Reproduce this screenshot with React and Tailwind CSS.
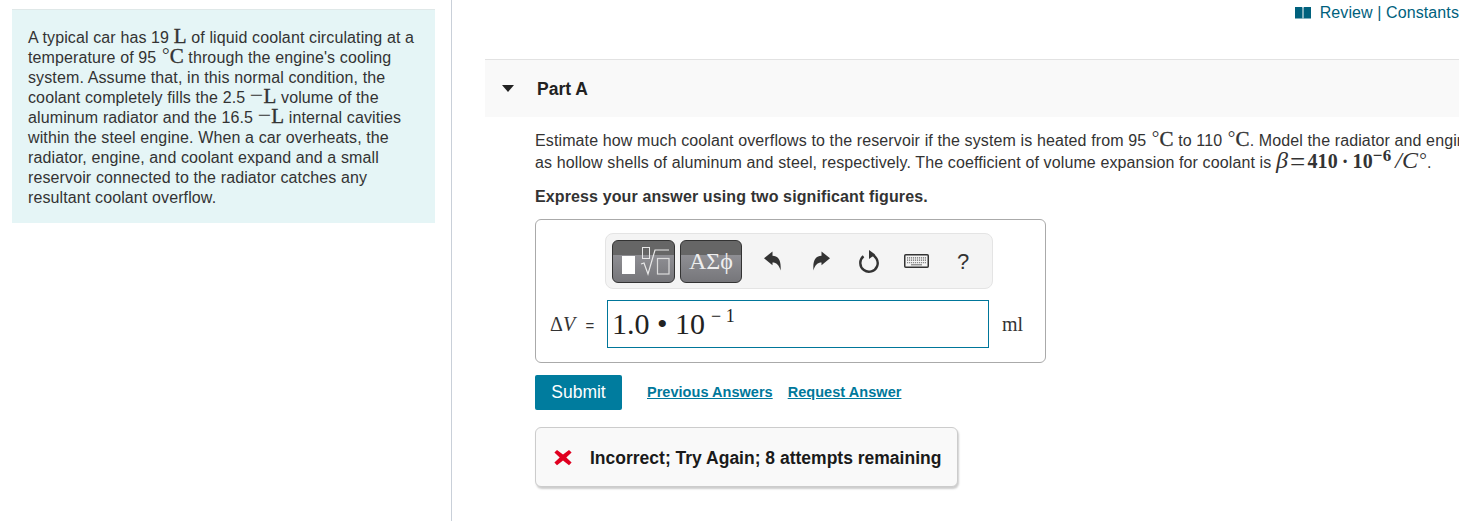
import React from 'react';

const Unit = ({ children, className = '' }) => (
  <span className={`font-['Liberation_Serif',serif] text-[21px] leading-[0] [-webkit-text-stroke:0.35px] ${className}`}>{children}</span>
);

const Deg = () => <span className="ml-[1px] align-[2px] font-['Liberation_Serif',serif] text-[19px] leading-[0]">°</span>;

const Celsius = () => (
  <>
    <Deg />
    <Unit>C</Unit>
  </>
);

const Liter = () => (
  <>
    <span className="font-['Liberation_Serif',serif] text-[24px] leading-[0]">−</span>
    <Unit>L</Unit>
  </>
);

const BookIcon = () => (
  <svg width="16" height="12" viewBox="0 0 16 12" className="mr-[9px]">
    <path d="M0 0h6.8l.7.6V12l-.7-.6H0z" fill="#00617d" />
    <path d="M16 0H9.2l-.7.6V12l.7-.6H16z" fill="#00617d" />
  </svg>
);

const ReplyIcon = ({ className = '' }) => (
  <svg width="17" height="20" viewBox="0 0 18 20" className={className}>
    <path d="M0 7L9 0v4.5C15 4.5 18.5 9 17.5 20 16 14 13 11.5 9 11.5v3z" fill="#333" />
  </svg>
);

const KeyboardIcon = () => (
  <svg width="25" height="14" viewBox="0 0 25 14">
    <rect x="0.75" y="0.75" width="23.5" height="12.5" rx="1" fill="#f4f4f4" stroke="#333" strokeWidth="1.5" />
    <path d="M3 3.8h19M3 6.2h19" stroke="#666" strokeWidth="1.2" strokeDasharray="1.2 0.8" />
    <path d="M3 8.6h19" stroke="#888" strokeWidth="1.1" strokeDasharray="1.2 0.8" />
    <path d="M7 10.8h11" stroke="#777" strokeWidth="1.1" />
  </svg>
);

const ResetIcon = () => (
  <svg width="20" height="23" viewBox="0 0 20 23">
    <path d="M4.5 6.3A8.7 8.7 0 1 0 11 4.4" fill="none" stroke="#333" strokeWidth="2.4" />
    <path d="M10 0v9l6.2-4.5z" fill="#333" />
  </svg>
);

const TemplateIcon = () => (
  <svg width="61" height="41" viewBox="0 0 61 41">
    <rect x="9" y="15" width="13" height="18" fill="#fff" />
    <rect x="29.5" y="6.5" width="7" height="11" fill="none" stroke="#e8e8e8" strokeWidth="1" />
    <path d="M28 23l3-1 4 11 7-24h14" fill="none" stroke="#e8e8e8" strokeWidth="1.2" />
    <rect x="44.5" y="17.5" width="11.5" height="15.5" fill="none" stroke="#dcdcdc" strokeWidth="1.2" />
  </svg>
);

export default function App() {
  return (
    <div className="flex h-[521px] w-[1459px] overflow-hidden bg-white font-['Liberation_Sans',Arial,sans-serif] tracking-[0.12px] text-[#333]">
      {/* Problem text */}
      <aside className="w-[452px] shrink-0 border-r border-[#c9d0d9] pl-[12px] pr-[16px] pt-[9px]">
        <div className="h-[214px] border-t border-[#dfe8e8] bg-[#e5f5f6] px-[16px] pt-[18px] text-[16px] leading-[20px]">
          <p className="whitespace-nowrap">A typical car has 19 <Unit>L</Unit> of liquid coolant circulating at a</p>
          <p className="whitespace-nowrap">temperature of 95 <Celsius /> through the engine's cooling</p>
          <p className="whitespace-nowrap">system. Assume that, in this normal condition, the</p>
          <p className="whitespace-nowrap">coolant completely fills the 2.5 <Liter /> volume of the</p>
          <p className="whitespace-nowrap">aluminum radiator and the 16.5 <Liter /> internal cavities</p>
          <p className="whitespace-nowrap">within the steel engine. When a car overheats, the</p>
          <p className="whitespace-nowrap">radiator, engine, and coolant expand and a small</p>
          <p className="whitespace-nowrap">reservoir connected to the radiator catches any</p>
          <p className="whitespace-nowrap">resultant coolant overflow.</p>
        </div>
      </aside>

      {/* Part A */}
      <main className="min-w-0 flex-1 pl-[33px]">
        <div className="flex h-[59px] items-start justify-end pt-[4px] text-[16px] leading-[18px] tracking-[0.1px] text-[#00617d]">
          <div className="flex items-center">
            <BookIcon />
            <span className="whitespace-nowrap">Review | Constants</span>
          </div>
        </div>

        <div className="flex h-[58px] items-center border-t border-[#e2e2e2] bg-[#f9f9f9] pl-[17px]">
          <span className="h-0 w-0 border-x-[6.5px] border-t-[7px] border-x-transparent border-t-[#222]" />
          <h2 className="ml-[23px] mt-[2px] text-[17.5px] font-bold tracking-normal text-[#222]">Part A</h2>
        </div>

        <div className="pl-[50px] pt-[13px]">
          <p className="whitespace-nowrap text-[16px] leading-[22px]">
            Estimate how much coolant overflows to the reservoir if the system is heated from 95 <Celsius /> to 110 <Celsius />. Model the radiator and engine
          </p>
          <p className="whitespace-nowrap text-[16px] leading-[22px]">
            as hollow shells of aluminum and steel, respectively. The coefficient of volume expansion for coolant is{' '}
            <span className="font-['Liberation_Serif',serif] text-[24px] italic leading-[0]">β</span>
            <span className="mx-[2px] align-[-3px] font-['Liberation_Serif',serif] text-[27px] leading-[0]">=</span>
            <span className="font-['Liberation_Serif',serif] text-[20px] font-bold leading-[0]">410</span>
            <span className="mx-[4px] font-['Liberation_Serif',serif] text-[20px] font-bold leading-[0]">·</span>
            <span className="font-['Liberation_Serif',serif] text-[20px] font-bold leading-[0]">10</span>
            <span className="align-[7px] font-['Liberation_Serif',serif] text-[17px] font-bold leading-[0]">−6</span>
            <span className="ml-[4px] font-['Liberation_Serif',serif] text-[24px] italic leading-[0]">/C</span>
            <span className="ml-[1px] align-[2px] font-['Liberation_Serif',serif] text-[19px] leading-[0]">°</span>.
          </p>
          <p className="mt-[12px] text-[16px] font-bold leading-[22px]">Express your answer using two significant figures.</p>

          {/* Answer box */}
          <div className="mt-[11px] h-[144px] w-[511px] rounded-[6px] border border-[#aaa] pt-[13px]">
            <div className="ml-[69px] flex h-[56px] w-[388px] items-center rounded-[8px] border border-[#e4e4e4] bg-[#f4f4f4] pl-[6px]">
              <button className="h-[43px] w-[63px] overflow-hidden rounded-[6px] border border-[#333] bg-[linear-gradient(#666_0,#666_33%,#8f8f94_33%,#76767a_100%)]">
                <TemplateIcon />
              </button>
              <button className="ml-[5px] flex h-[43px] w-[62px] items-center justify-center rounded-[6px] border border-[#333] bg-[linear-gradient(#666_0,#666_33%,#8f8f94_33%,#76767a_100%)] font-['Liberation_Serif',serif] text-[24px] tracking-normal text-[#eee]">
                ΑΣϕ
              </button>
              <ReplyIcon className="ml-[22px]" />
              <ReplyIcon className="ml-[32px] -scale-x-100" />
              <span className="ml-[29px] flex"><ResetIcon /></span>
              <span className="ml-[25px] flex"><KeyboardIcon /></span>
              <span className="ml-[28px] text-[22px] text-[#333]">?</span>
            </div>

            <div className="mt-[11px] flex items-center">
              <span className="ml-[14px] w-[57px] whitespace-nowrap font-['Liberation_Serif',serif] text-[20px]">
                Δ<i>V</i> <span className="ml-[5px] font-['Liberation_Sans',sans-serif] text-[15px]">=</span>
              </span>
              <div className="flex h-[48px] w-[382px] items-center border border-[#00769a] pb-[2px] pl-[4px] font-['Liberation_Serif',serif] text-[30px] tracking-normal text-[#222]">
                1.0 • 10
                <span className="mb-[14px] ml-[6px] text-[18px]">− 1</span>
              </div>
              <span className="ml-[13px] font-['Liberation_Serif',serif] text-[20px] tracking-normal">ml</span>
            </div>
          </div>

          {/* Actions */}
          <div className="mt-[12px] flex items-center">
            <button className="h-[35px] w-[87px] rounded-[2px] bg-[#007c9e] text-[17.5px] tracking-normal text-white">Submit</button>
            <a className="ml-[25px] text-[14.5px] font-bold tracking-[0.03px] text-[#00789b] underline">Previous Answers</a>
            <a className="ml-[15px] text-[14.5px] font-bold tracking-[0.05px] text-[#00789b] underline">Request Answer</a>
          </div>

          {/* Feedback */}
          <div className="mt-[17px] flex h-[60px] w-[423px] items-center rounded-[6px] border border-[#ccc] bg-[#f9f9f9] pl-[18px] shadow-[1px_2px_2px_rgba(0,0,0,0.2)]">
            <svg width="18" height="17" viewBox="0 0 18 17">
              <path d="M3 1l6 4.6L15 1l2.6 2.6L12.3 8.5l5.3 5L15 16.3 9 11.5l-6 4.8L.4 13.5l5.3-5L.4 3.6z" fill="#e00020" />
            </svg>
            <span className="ml-[18px] mt-[2px] whitespace-nowrap text-[17.5px] font-bold tracking-normal text-[#1a1a1a]">Incorrect; Try Again; 8 attempts remaining</span>
          </div>
        </div>
      </main>
    </div>
  );
}
